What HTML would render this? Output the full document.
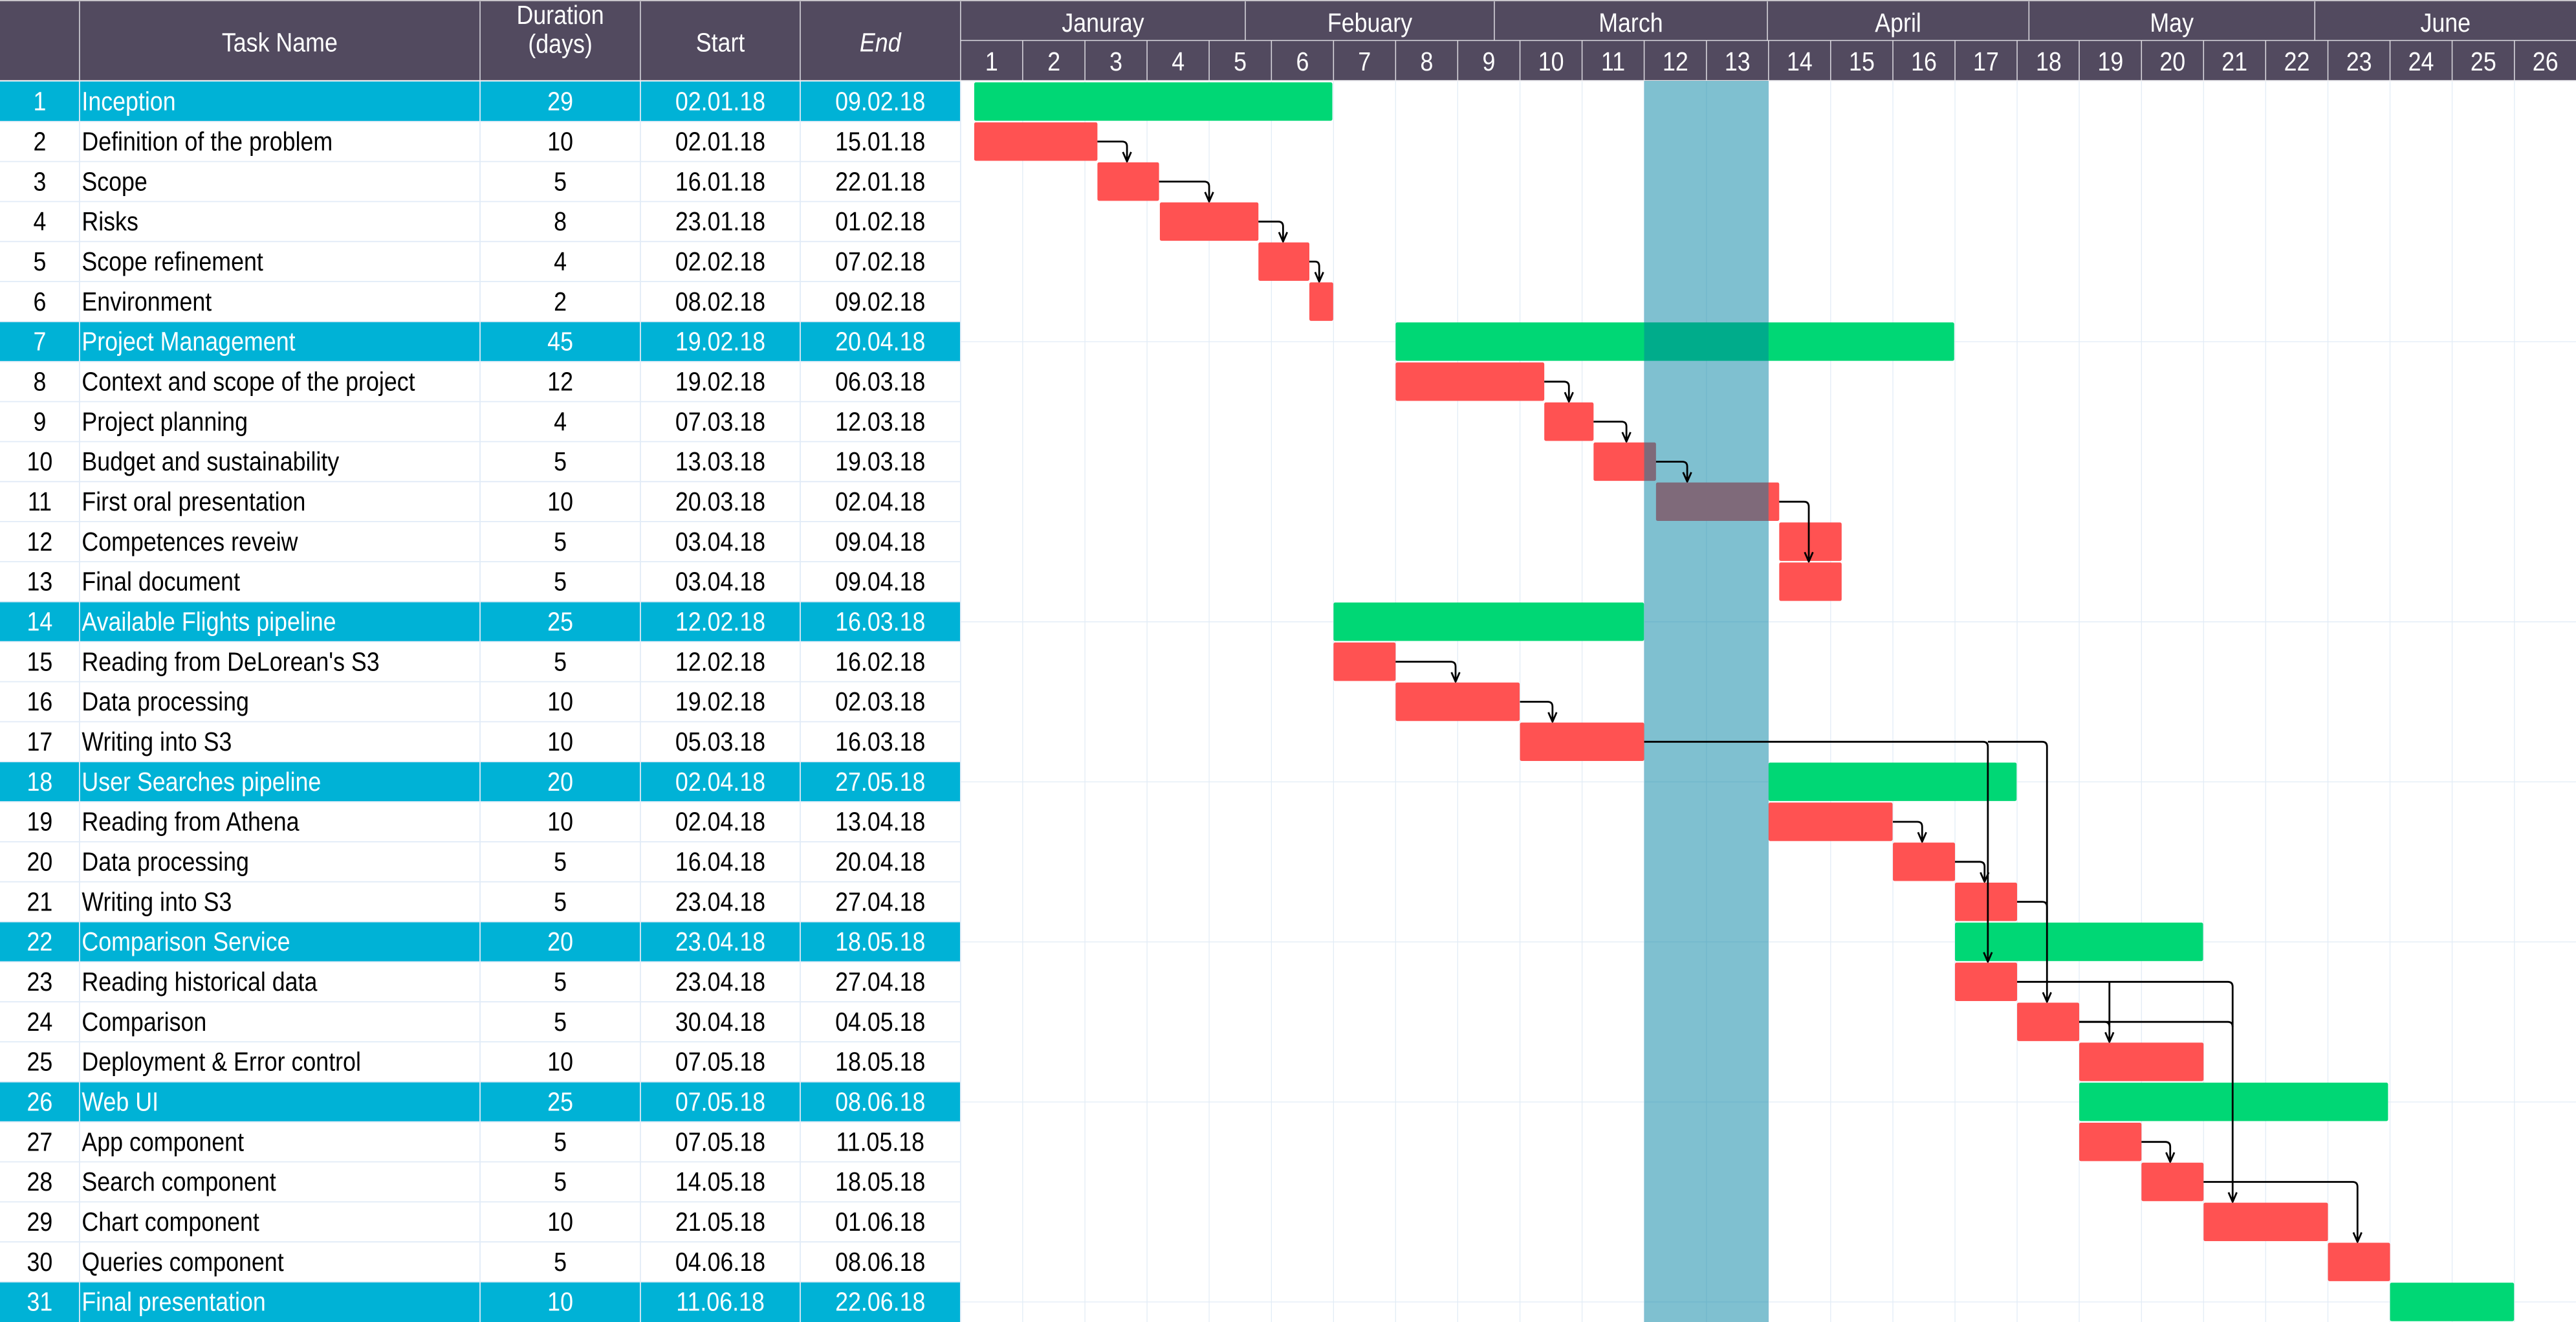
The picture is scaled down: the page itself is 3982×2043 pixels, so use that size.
<!DOCTYPE html>
<html><head><meta charset="utf-8"><style>
html,body{margin:0;padding:0;background:#fff;overflow:hidden}
svg{display:block}
text{font-family:"Liberation Sans",Arial,sans-serif}
</style></head><body>
<svg width="3982" height="2043" viewBox="0 0 1568 804.5" preserveAspectRatio="none" xmlns="http://www.w3.org/2000/svg">
<rect x="0" y="0" width="1568" height="804.5" fill="#fff"/>
<!-- header -->
<rect x="0" y="0.8" width="1568" height="48" fill="#524a5f"/>
<line x1="0" y1="0.6" x2="1568" y2="0.6" stroke="#9a96a0" stroke-width="0.6"/>
<g stroke="#dcdae0" stroke-width="0.6">
<line x1="48.4" y1="0.8" x2="48.4" y2="48.8"/><line x1="292.2" y1="0.8" x2="292.2" y2="48.8"/><line x1="389.8" y1="0.8" x2="389.8" y2="48.8"/><line x1="487.1" y1="0.8" x2="487.1" y2="48.8"/><line x1="584.7" y1="0.8" x2="584.7" y2="48.8"/>
<line x1="584.7" y1="24.6" x2="1568" y2="24.6"/>
<line x1="758" y1="0.8" x2="758" y2="24.6"/><line x1="909.6" y1="0.8" x2="909.6" y2="24.6"/><line x1="1075.8" y1="0.8" x2="1075.8" y2="24.6"/><line x1="1235" y1="0.8" x2="1235" y2="24.6"/><line x1="1409" y1="0.8" x2="1409" y2="24.6"/>
</g>
<g stroke="#dcdae0" stroke-width="0.6" id="dl">
<line x1="622.5" y1="24.6" x2="622.5" y2="48.8"/><line x1="660.4" y1="24.6" x2="660.4" y2="48.8"/><line x1="698.2" y1="24.6" x2="698.2" y2="48.8"/><line x1="736" y1="24.6" x2="736" y2="48.8"/><line x1="773.9" y1="24.6" x2="773.9" y2="48.8"/><line x1="811.7" y1="24.6" x2="811.7" y2="48.8"/><line x1="849.5" y1="24.6" x2="849.5" y2="48.8"/><line x1="887.3" y1="24.6" x2="887.3" y2="48.8"/><line x1="925.2" y1="24.6" x2="925.2" y2="48.8"/><line x1="963" y1="24.6" x2="963" y2="48.8"/><line x1="1000.8" y1="24.6" x2="1000.8" y2="48.8"/><line x1="1038.7" y1="24.6" x2="1038.7" y2="48.8"/><line x1="1076.5" y1="24.6" x2="1076.5" y2="48.8"/><line x1="1114.3" y1="24.6" x2="1114.3" y2="48.8"/><line x1="1152.2" y1="24.6" x2="1152.2" y2="48.8"/><line x1="1190" y1="24.6" x2="1190" y2="48.8"/><line x1="1227.8" y1="24.6" x2="1227.8" y2="48.8"/><line x1="1265.6" y1="24.6" x2="1265.6" y2="48.8"/><line x1="1303.5" y1="24.6" x2="1303.5" y2="48.8"/><line x1="1341.3" y1="24.6" x2="1341.3" y2="48.8"/><line x1="1379.1" y1="24.6" x2="1379.1" y2="48.8"/><line x1="1417" y1="24.6" x2="1417" y2="48.8"/><line x1="1454.8" y1="24.6" x2="1454.8" y2="48.8"/><line x1="1492.6" y1="24.6" x2="1492.6" y2="48.8"/><line x1="1530.5" y1="24.6" x2="1530.5" y2="48.8"/>
</g>
<line x1="0" y1="49.2" x2="1568" y2="49.2" stroke="#f0f0f3" stroke-width="0.8"/>

<!-- gantt grid -->
<g stroke="#e2ecf6" stroke-width="0.5">
<line x1="622.5" y1="49.6" x2="622.5" y2="804.5"/><line x1="660.4" y1="49.6" x2="660.4" y2="804.5"/><line x1="698.2" y1="49.6" x2="698.2" y2="804.5"/><line x1="736" y1="49.6" x2="736" y2="804.5"/><line x1="773.9" y1="49.6" x2="773.9" y2="804.5"/><line x1="811.7" y1="49.6" x2="811.7" y2="804.5"/><line x1="849.5" y1="49.6" x2="849.5" y2="804.5"/><line x1="887.3" y1="49.6" x2="887.3" y2="804.5"/><line x1="925.2" y1="49.6" x2="925.2" y2="804.5"/><line x1="963" y1="49.6" x2="963" y2="804.5"/><line x1="1000.8" y1="49.6" x2="1000.8" y2="804.5"/><line x1="1038.7" y1="49.6" x2="1038.7" y2="804.5"/><line x1="1076.5" y1="49.6" x2="1076.5" y2="804.5"/><line x1="1114.3" y1="49.6" x2="1114.3" y2="804.5"/><line x1="1152.2" y1="49.6" x2="1152.2" y2="804.5"/><line x1="1190" y1="49.6" x2="1190" y2="804.5"/><line x1="1227.8" y1="49.6" x2="1227.8" y2="804.5"/><line x1="1265.6" y1="49.6" x2="1265.6" y2="804.5"/><line x1="1303.5" y1="49.6" x2="1303.5" y2="804.5"/><line x1="1341.3" y1="49.6" x2="1341.3" y2="804.5"/><line x1="1379.1" y1="49.6" x2="1379.1" y2="804.5"/><line x1="1417" y1="49.6" x2="1417" y2="804.5"/><line x1="1454.8" y1="49.6" x2="1454.8" y2="804.5"/><line x1="1492.6" y1="49.6" x2="1492.6" y2="804.5"/><line x1="1530.5" y1="49.6" x2="1530.5" y2="804.5"/>
<line x1="584.7" y1="207.9" x2="1568" y2="207.9"/><line x1="584.7" y1="378.4" x2="1568" y2="378.4"/><line x1="584.7" y1="475.8" x2="1568" y2="475.8"/><line x1="584.7" y1="573.2" x2="1568" y2="573.2"/><line x1="584.7" y1="670.6" x2="1568" y2="670.6"/><line x1="584.7" y1="792.3" x2="1568" y2="792.3"/>
</g>

<!-- group rows in table -->
<g fill="#00b2d6">
<rect x="0" y="49.6" width="584.4" height="24.35"/>
<rect x="0" y="195.7" width="584.4" height="24.35"/>
<rect x="0" y="366.15" width="584.4" height="24.35"/>
<rect x="0" y="463.55" width="584.4" height="24.35"/>
<rect x="0" y="560.95" width="584.4" height="24.35"/>
<rect x="0" y="658.35" width="584.4" height="24.35"/>
<rect x="0" y="780.1" width="584.4" height="24.4"/>
</g>
<!-- table lines -->
<g stroke="#e1ebf7" stroke-width="0.7">
<line x1="48.4" y1="49.6" x2="48.4" y2="804.5"/><line x1="292.2" y1="49.6" x2="292.2" y2="804.5"/><line x1="389.8" y1="49.6" x2="389.8" y2="804.5"/><line x1="487.1" y1="49.6" x2="487.1" y2="804.5"/><line x1="584.7" y1="49.6" x2="584.7" y2="804.5"/>
<line x1="0" y1="73.95" x2="584.4" y2="73.95"/><line x1="0" y1="98.3" x2="584.4" y2="98.3"/><line x1="0" y1="122.65" x2="584.4" y2="122.65"/><line x1="0" y1="147" x2="584.4" y2="147"/><line x1="0" y1="171.35" x2="584.4" y2="171.35"/><line x1="0" y1="195.7" x2="584.4" y2="195.7"/><line x1="0" y1="220.05" x2="584.4" y2="220.05"/><line x1="0" y1="244.4" x2="584.4" y2="244.4"/><line x1="0" y1="268.75" x2="584.4" y2="268.75"/><line x1="0" y1="293.1" x2="584.4" y2="293.1"/><line x1="0" y1="317.45" x2="584.4" y2="317.45"/><line x1="0" y1="341.8" x2="584.4" y2="341.8"/><line x1="0" y1="366.15" x2="584.4" y2="366.15"/><line x1="0" y1="390.5" x2="584.4" y2="390.5"/><line x1="0" y1="414.85" x2="584.4" y2="414.85"/><line x1="0" y1="439.2" x2="584.4" y2="439.2"/><line x1="0" y1="463.55" x2="584.4" y2="463.55"/><line x1="0" y1="487.9" x2="584.4" y2="487.9"/><line x1="0" y1="512.25" x2="584.4" y2="512.25"/><line x1="0" y1="536.6" x2="584.4" y2="536.6"/><line x1="0" y1="560.95" x2="584.4" y2="560.95"/><line x1="0" y1="585.3" x2="584.4" y2="585.3"/><line x1="0" y1="609.65" x2="584.4" y2="609.65"/><line x1="0" y1="634" x2="584.4" y2="634"/><line x1="0" y1="658.35" x2="584.4" y2="658.35"/><line x1="0" y1="682.7" x2="584.4" y2="682.7"/><line x1="0" y1="707.05" x2="584.4" y2="707.05"/><line x1="0" y1="731.4" x2="584.4" y2="731.4"/><line x1="0" y1="755.75" x2="584.4" y2="755.75"/><line x1="0" y1="780.1" x2="584.4" y2="780.1"/>
</g>

<!-- bars -->
<g fill="#00d775">
<rect x="593" y="50.1" width="218" height="23.4" rx="1"/>
<rect x="849.5" y="196.2" width="340" height="23.4" rx="1"/>
<rect x="811.7" y="366.65" width="189" height="23.4" rx="1"/>
<rect x="1076.5" y="464.05" width="151" height="23.4" rx="1"/>
<rect x="1190" y="561.45" width="151" height="23.4" rx="1"/>
<rect x="1265.6" y="658.85" width="188" height="23.4" rx="1"/>
<rect x="1454.8" y="780.6" width="75.5" height="23.4" rx="1"/>
</g>
<g fill="#ff5252">
<rect x="593" y="74.45" width="75" height="23.4" rx="1"/>
<rect x="668" y="98.8" width="37.5" height="23.4" rx="1"/>
<rect x="706" y="123.15" width="60" height="23.4" rx="1"/>
<rect x="766" y="147.5" width="31" height="23.4" rx="1"/>
<rect x="797" y="171.85" width="14.5" height="23.4" rx="1"/>
<rect x="849.5" y="220.55" width="90.5" height="23.4" rx="1"/>
<rect x="940" y="244.9" width="30" height="23.4" rx="1"/>
<rect x="970" y="269.25" width="38" height="23.4" rx="1"/>
<rect x="1008" y="293.6" width="75" height="23.4" rx="1"/>
<rect x="1083" y="317.95" width="38" height="23.4" rx="1"/>
<rect x="1083" y="342.3" width="38" height="23.4" rx="1"/>
<rect x="811.7" y="391" width="37.8" height="23.4" rx="1"/>
<rect x="849.5" y="415.35" width="75.5" height="23.4" rx="1"/>
<rect x="925.2" y="439.7" width="75.6" height="23.4" rx="1"/>
<rect x="1076.5" y="488.4" width="75.5" height="23.4" rx="1"/>
<rect x="1152.2" y="512.75" width="37.8" height="23.4" rx="1"/>
<rect x="1190" y="537.1" width="37.8" height="23.4" rx="1"/>
<rect x="1190" y="585.8" width="37.8" height="23.4" rx="1"/>
<rect x="1227.8" y="610.15" width="37.8" height="23.4" rx="1"/>
<rect x="1265.6" y="634.5" width="75.7" height="23.4" rx="1"/>
<rect x="1265.6" y="683.2" width="37.9" height="23.4" rx="1"/>
<rect x="1303.5" y="707.55" width="37.8" height="23.4" rx="1"/>
<rect x="1341.3" y="731.9" width="75.7" height="23.4" rx="1"/>
<rect x="1417" y="756.25" width="37.8" height="23.4" rx="1"/>
</g>
<!-- highlight overlay -->
<rect x="1000.8" y="49.2" width="75.7" height="755.3" fill="rgba(0,130,162,0.5)"/>

<!-- arrows -->
<g fill="none" stroke="#000" stroke-width="1.1" stroke-linejoin="round">
<path d="M668 86.15H683Q686 86.15 686 89.15V98.3M683.5 92.5L686 98.3L688.5 92.5"/>
<path d="M705.5 110.5H733Q736 110.5 736 113.5V122.65M733.5 116.9L736 122.65L738.5 116.9"/>
<path d="M766 134.85H778Q781 134.85 781 137.85V147M778.5 141.3L781 147L783.5 141.3"/>
<path d="M797 159.2H800.5Q803 159.2 803 162.2V171.35M800.5 165.6L803 171.35L805.5 165.6"/>
<path d="M940 232.25H952Q955 232.25 955 235.25V244.4M952.5 238.7L955 244.4L957.5 238.7"/>
<path d="M970 256.6H987Q990 256.6 990 259.6V268.75M987.5 263L990 268.75L992.5 263"/>
<path d="M1008 280.95H1024Q1027 280.95 1027 283.95V293.1M1024.5 287.4L1027 293.1L1029.5 287.4"/>
<path d="M1083 305.3H1098Q1101 305.3 1101 308.3V341.8M1098.5 336L1101 341.8L1103.5 336"/>
<path d="M849.5 402.7H883Q886 402.7 886 405.7V414.85M883.5 409.1L886 414.85L888.5 409.1"/>
<path d="M925.2 427.05H942Q945 427.05 945 430.05V439.2M942.5 433.5L945 439.2L947.5 433.5"/>
<path d="M1000.8 451.4H1207Q1210 451.4 1210 454.4V585.3M1207.5 579.5L1210 585.3L1212.5 579.5"/>
<path d="M1210 451.4H1243Q1246 451.4 1246 454.4V609.65M1243.5 603.9L1246 609.65L1248.5 603.9"/>
<path d="M1152.2 500.1H1167Q1170 500.1 1170 503.1V512.25M1167.5 506.5L1170 512.25L1172.5 506.5"/>
<path d="M1190 524.45H1205Q1208 524.45 1208 527.45V536.6M1205.5 530.9L1208 536.6L1210.5 530.9"/>
<path d="M1227.8 548.8H1243Q1246 548.8 1246 551.8V560"/>
<path d="M1227.8 597.5H1356Q1359 597.5 1359 600.5V731.4M1356.5 725.6L1359 731.4L1361.5 725.6"/>
<path d="M1284 597.5Q1284 597.5 1284 600.5V634M1281.5 628.2L1284 634L1286.5 628.2"/>
<path d="M1265.6 621.85H1356Q1359 621.85 1359 624.85"/>
<path d="M1265.6 621.85H1281Q1284 621.85 1284 624.85"/>
<path d="M1303.5 694.9H1318Q1321 694.9 1321 697.9V707.05M1318.5 701.3L1321 707.05L1323.5 701.3"/>
<path d="M1341.3 719.25H1432Q1435 719.25 1435 722.25V755.75M1432.5 750L1435 755.75L1437.5 750"/>
</g>

<!-- text -->
<g transform="scale(0.87,1)" font-size="16.2">
<g fill="#fff" text-anchor="middle">
<text x="195.7" y="31.3">Task Name</text>
<text x="392" y="14.6">Duration</text>
<text x="392" y="32">(days)</text>
<text x="504" y="31.3">Start</text>
<text x="615.9" y="31.3" font-style="italic">End</text>
<text x="771.7" y="19.3">Januray</text>
<text x="958.4" y="19.3">Febuary</text>
<text x="1141" y="19.3">March</text>
<text x="1328" y="19.3">April</text>
<text x="1519.5" y="19.3">May</text>
<text x="1711" y="19.3">June</text>
<text x="693.8" y="43">1</text><text x="737.4" y="43">2</text><text x="780.8" y="43">3</text><text x="824.3" y="43">4</text><text x="867.7" y="43">5</text><text x="911.3" y="43">6</text><text x="954.7" y="43">7</text><text x="998.2" y="43">8</text><text x="1041.7" y="43">9</text><text x="1085.2" y="43">10</text><text x="1128.6" y="43">11</text><text x="1172.2" y="43">12</text><text x="1215.6" y="43">13</text><text x="1259.1" y="43">14</text><text x="1302.6" y="43">15</text><text x="1346.1" y="43">16</text><text x="1389.5" y="43">17</text><text x="1433.4" y="43">18</text><text x="1476.6" y="43">19</text><text x="1520" y="43">20</text><text x="1563.4" y="43">21</text><text x="1607" y="43">22</text><text x="1650.5" y="43">23</text><text x="1693.9" y="43">24</text><text x="1737.5" y="43">25</text><text x="1780.9" y="43">26</text>
</g>
<!-- group rows (white) -->
<g fill="#fff">
<text x="27.8" y="67.2" text-anchor="middle">1</text><text x="57.2" y="67.2">Inception</text><text x="392" y="67.2" text-anchor="middle">29</text><text x="504" y="67.2" text-anchor="middle">02.01.18</text><text x="615.9" y="67.2" text-anchor="middle">09.02.18</text>
<text x="27.8" y="213.3" text-anchor="middle">7</text><text x="57.2" y="213.3">Project Management</text><text x="392" y="213.3" text-anchor="middle">45</text><text x="504" y="213.3" text-anchor="middle">19.02.18</text><text x="615.9" y="213.3" text-anchor="middle">20.04.18</text>
<text x="27.8" y="383.75" text-anchor="middle">14</text><text x="57.2" y="383.75">Available Flights pipeline</text><text x="392" y="383.75" text-anchor="middle">25</text><text x="504" y="383.75" text-anchor="middle">12.02.18</text><text x="615.9" y="383.75" text-anchor="middle">16.03.18</text>
<text x="27.8" y="481.15" text-anchor="middle">18</text><text x="57.2" y="481.15">User Searches pipeline</text><text x="392" y="481.15" text-anchor="middle">20</text><text x="504" y="481.15" text-anchor="middle">02.04.18</text><text x="615.9" y="481.15" text-anchor="middle">27.05.18</text>
<text x="27.8" y="578.55" text-anchor="middle">22</text><text x="57.2" y="578.55">Comparison Service</text><text x="392" y="578.55" text-anchor="middle">20</text><text x="504" y="578.55" text-anchor="middle">23.04.18</text><text x="615.9" y="578.55" text-anchor="middle">18.05.18</text>
<text x="27.8" y="675.95" text-anchor="middle">26</text><text x="57.2" y="675.95">Web UI</text><text x="392" y="675.95" text-anchor="middle">25</text><text x="504" y="675.95" text-anchor="middle">07.05.18</text><text x="615.9" y="675.95" text-anchor="middle">08.06.18</text>
<text x="27.8" y="797.7" text-anchor="middle">31</text><text x="57.2" y="797.7">Final presentation</text><text x="392" y="797.7" text-anchor="middle">10</text><text x="504" y="797.7" text-anchor="middle">11.06.18</text><text x="615.9" y="797.7" text-anchor="middle">22.06.18</text>
</g>
<g fill="#000">
<text x="27.8" y="91.55" text-anchor="middle">2</text><text x="57.2" y="91.55">Definition of the problem</text><text x="392" y="91.55" text-anchor="middle">10</text><text x="504" y="91.55" text-anchor="middle">02.01.18</text><text x="615.9" y="91.55" text-anchor="middle">15.01.18</text>
<text x="27.8" y="115.9" text-anchor="middle">3</text><text x="57.2" y="115.9">Scope</text><text x="392" y="115.9" text-anchor="middle">5</text><text x="504" y="115.9" text-anchor="middle">16.01.18</text><text x="615.9" y="115.9" text-anchor="middle">22.01.18</text>
<text x="27.8" y="140.25" text-anchor="middle">4</text><text x="57.2" y="140.25">Risks</text><text x="392" y="140.25" text-anchor="middle">8</text><text x="504" y="140.25" text-anchor="middle">23.01.18</text><text x="615.9" y="140.25" text-anchor="middle">01.02.18</text>
<text x="27.8" y="164.6" text-anchor="middle">5</text><text x="57.2" y="164.6">Scope refinement</text><text x="392" y="164.6" text-anchor="middle">4</text><text x="504" y="164.6" text-anchor="middle">02.02.18</text><text x="615.9" y="164.6" text-anchor="middle">07.02.18</text>
<text x="27.8" y="188.95" text-anchor="middle">6</text><text x="57.2" y="188.95">Environment</text><text x="392" y="188.95" text-anchor="middle">2</text><text x="504" y="188.95" text-anchor="middle">08.02.18</text><text x="615.9" y="188.95" text-anchor="middle">09.02.18</text>
<text x="27.8" y="237.65" text-anchor="middle">8</text><text x="57.2" y="237.65">Context and scope of the project</text><text x="392" y="237.65" text-anchor="middle">12</text><text x="504" y="237.65" text-anchor="middle">19.02.18</text><text x="615.9" y="237.65" text-anchor="middle">06.03.18</text>
<text x="27.8" y="262" text-anchor="middle">9</text><text x="57.2" y="262">Project planning</text><text x="392" y="262" text-anchor="middle">4</text><text x="504" y="262" text-anchor="middle">07.03.18</text><text x="615.9" y="262" text-anchor="middle">12.03.18</text>
<text x="27.8" y="286.35" text-anchor="middle">10</text><text x="57.2" y="286.35">Budget and sustainability</text><text x="392" y="286.35" text-anchor="middle">5</text><text x="504" y="286.35" text-anchor="middle">13.03.18</text><text x="615.9" y="286.35" text-anchor="middle">19.03.18</text>
<text x="27.8" y="310.7" text-anchor="middle">11</text><text x="57.2" y="310.7">First oral presentation</text><text x="392" y="310.7" text-anchor="middle">10</text><text x="504" y="310.7" text-anchor="middle">20.03.18</text><text x="615.9" y="310.7" text-anchor="middle">02.04.18</text>
<text x="27.8" y="335.05" text-anchor="middle">12</text><text x="57.2" y="335.05">Competences reveiw</text><text x="392" y="335.05" text-anchor="middle">5</text><text x="504" y="335.05" text-anchor="middle">03.04.18</text><text x="615.9" y="335.05" text-anchor="middle">09.04.18</text>
<text x="27.8" y="359.4" text-anchor="middle">13</text><text x="57.2" y="359.4">Final document</text><text x="392" y="359.4" text-anchor="middle">5</text><text x="504" y="359.4" text-anchor="middle">03.04.18</text><text x="615.9" y="359.4" text-anchor="middle">09.04.18</text>
<text x="27.8" y="408.1" text-anchor="middle">15</text><text x="57.2" y="408.1">Reading from DeLorean's S3</text><text x="392" y="408.1" text-anchor="middle">5</text><text x="504" y="408.1" text-anchor="middle">12.02.18</text><text x="615.9" y="408.1" text-anchor="middle">16.02.18</text>
<text x="27.8" y="432.45" text-anchor="middle">16</text><text x="57.2" y="432.45">Data processing</text><text x="392" y="432.45" text-anchor="middle">10</text><text x="504" y="432.45" text-anchor="middle">19.02.18</text><text x="615.9" y="432.45" text-anchor="middle">02.03.18</text>
<text x="27.8" y="456.8" text-anchor="middle">17</text><text x="57.2" y="456.8">Writing into S3</text><text x="392" y="456.8" text-anchor="middle">10</text><text x="504" y="456.8" text-anchor="middle">05.03.18</text><text x="615.9" y="456.8" text-anchor="middle">16.03.18</text>
<text x="27.8" y="505.5" text-anchor="middle">19</text><text x="57.2" y="505.5">Reading from Athena</text><text x="392" y="505.5" text-anchor="middle">10</text><text x="504" y="505.5" text-anchor="middle">02.04.18</text><text x="615.9" y="505.5" text-anchor="middle">13.04.18</text>
<text x="27.8" y="529.85" text-anchor="middle">20</text><text x="57.2" y="529.85">Data processing</text><text x="392" y="529.85" text-anchor="middle">5</text><text x="504" y="529.85" text-anchor="middle">16.04.18</text><text x="615.9" y="529.85" text-anchor="middle">20.04.18</text>
<text x="27.8" y="554.2" text-anchor="middle">21</text><text x="57.2" y="554.2">Writing into S3</text><text x="392" y="554.2" text-anchor="middle">5</text><text x="504" y="554.2" text-anchor="middle">23.04.18</text><text x="615.9" y="554.2" text-anchor="middle">27.04.18</text>
<text x="27.8" y="602.9" text-anchor="middle">23</text><text x="57.2" y="602.9">Reading historical data</text><text x="392" y="602.9" text-anchor="middle">5</text><text x="504" y="602.9" text-anchor="middle">23.04.18</text><text x="615.9" y="602.9" text-anchor="middle">27.04.18</text>
<text x="27.8" y="627.25" text-anchor="middle">24</text><text x="57.2" y="627.25">Comparison</text><text x="392" y="627.25" text-anchor="middle">5</text><text x="504" y="627.25" text-anchor="middle">30.04.18</text><text x="615.9" y="627.25" text-anchor="middle">04.05.18</text>
<text x="27.8" y="651.6" text-anchor="middle">25</text><text x="57.2" y="651.6">Deployment &amp; Error control</text><text x="392" y="651.6" text-anchor="middle">10</text><text x="504" y="651.6" text-anchor="middle">07.05.18</text><text x="615.9" y="651.6" text-anchor="middle">18.05.18</text>
<text x="27.8" y="700.3" text-anchor="middle">27</text><text x="57.2" y="700.3">App component</text><text x="392" y="700.3" text-anchor="middle">5</text><text x="504" y="700.3" text-anchor="middle">07.05.18</text><text x="615.9" y="700.3" text-anchor="middle">11.05.18</text>
<text x="27.8" y="724.65" text-anchor="middle">28</text><text x="57.2" y="724.65">Search component</text><text x="392" y="724.65" text-anchor="middle">5</text><text x="504" y="724.65" text-anchor="middle">14.05.18</text><text x="615.9" y="724.65" text-anchor="middle">18.05.18</text>
<text x="27.8" y="749" text-anchor="middle">29</text><text x="57.2" y="749">Chart component</text><text x="392" y="749" text-anchor="middle">10</text><text x="504" y="749" text-anchor="middle">21.05.18</text><text x="615.9" y="749" text-anchor="middle">01.06.18</text>
<text x="27.8" y="773.35" text-anchor="middle">30</text><text x="57.2" y="773.35">Queries component</text><text x="392" y="773.35" text-anchor="middle">5</text><text x="504" y="773.35" text-anchor="middle">04.06.18</text><text x="615.9" y="773.35" text-anchor="middle">08.06.18</text>
</g>
</g>
</svg>
</body></html>
